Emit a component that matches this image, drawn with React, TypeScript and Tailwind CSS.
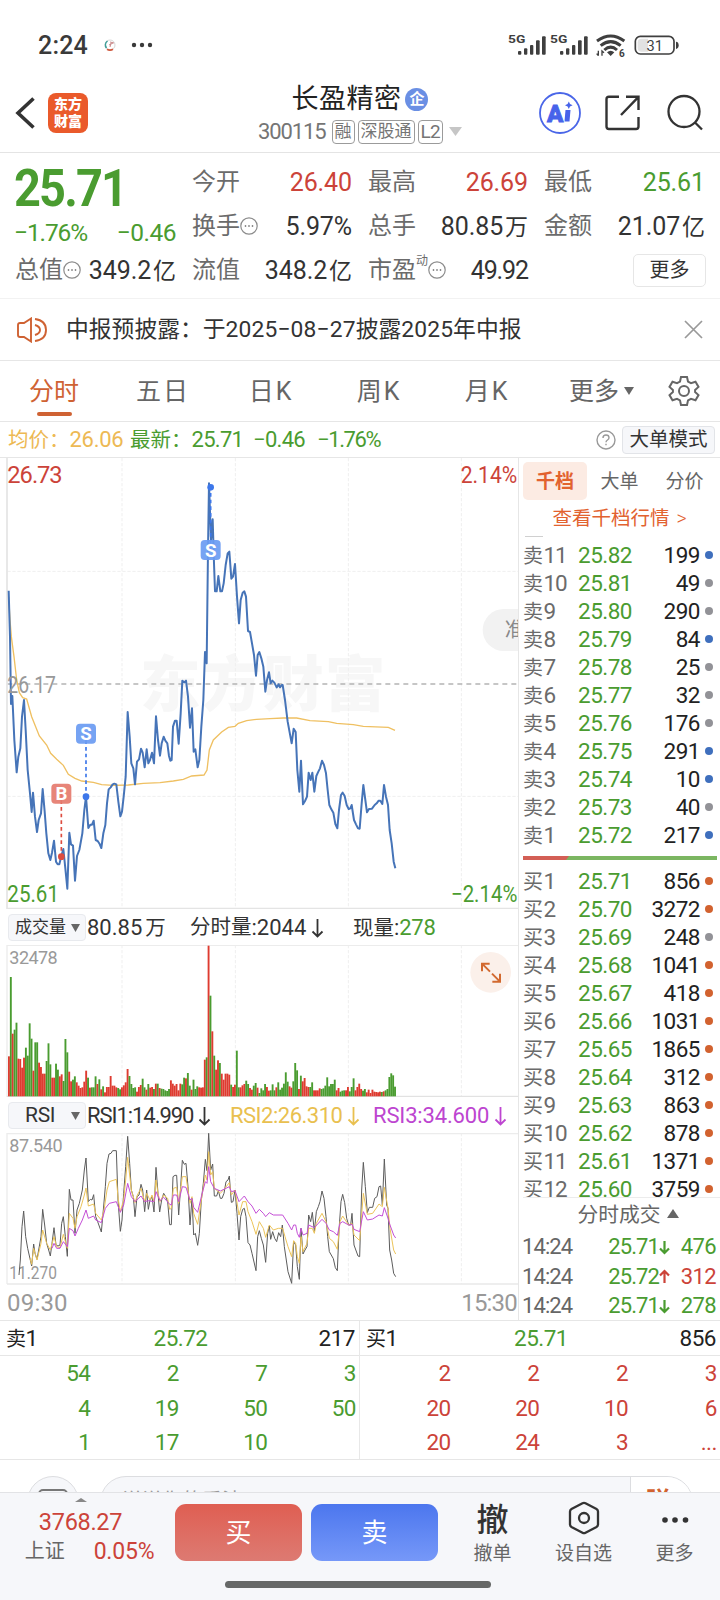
import React from 'react';
import clsx from 'clsx';

const GREEN = '#4a9c30';
const RED = '#cc4339';

// Série de preço do dia (coordenadas em 3x)
const PRICE =
  '26,422 30,560 33,762 37,738 43,870 50,967 55,920 61,895 66,800 72,750 77,840 83,960 90,1030 95,1086 99,1028 105,1100 111,1146 116,1110 123,1090 128,1017 134,1085 139,1150 145,1210 151,1230 156,1208 162,1172 168,1235 173,1243 178,1243 184,1218 190,1197 196,1255 202,1316 208,1148 213,1183 219,1187 225,1292 231,1218 238,1200 247,1150 253,1080 258,1040 265,1134 271,1124 276,1124 281,1112 287,1170 293,1173 299,1182 304,1194 310,1150 316,1125 321,1060 326,1018 332,1012 338,1003 343,1001 349,1003 355,1055 361,1099 366,1085 371,1040 377,980 383,786 389,860 394,940 400,955 405,1003 411,935 417,928 423,896 428,908 434,952 440,898 445,940 450,930 456,908 462,940 468,799 474,870 480,917 485,880 491,860 496,872 502,880 507,918 511,932 515,930 519,830 525,812 530,812 536,881 542,790 547,692 553,697 558,692 564,740 570,833 576,775 581,905 586,898 593,952 598,930 604,830 610,750 615,606 620,640 624,300 627,100 633,270 638,208 642,340 645,424 650,424 655,378 661,424 666,424 671,400 677,345 683,310 688,305 694,386 699,380 705,342 711,440 717,520 722,450 728,428 733,424 738,440 744,543 750,546 756,580 762,615 768,677 773,615 778,606 784,625 790,650 796,725 801,690 807,667 812,700 817,692 823,698 830,712 836,703 840,712 845,705 848,705 855,750 863,815 875,880 881,836 887,846 892,960 898,1025 903,932 909,1063 915,1053 921,1040 926,968 932,990 937,968 943,1025 949,978 955,965 960,955 966,932 972,945 978,970 983,1020 988,1065 994,1078 1000,1088 1006,1122 1012,1135 1017,1080 1023,1035 1028,1028 1034,1038 1040,1065 1046,1077 1051,1075 1055,1065 1062,1110 1068,1123 1074,1135 1079,1136 1085,1060 1090,1005 1096,1050 1101,1087 1107,1077 1116,1076 1124,1065 1130,1060 1136,1052 1141,1052 1147,1062 1152,1005 1158,1040 1164,1065 1169,1140 1175,1180 1181,1235 1186,1255';

const AVERAGE =
  '26,440 30,510 34,560 42,620 50,690 58,728 68,743 80,747 95,800 118,858 140,885 152,910 170,928 190,946 205,973 225,985 245,993 280,997 305,1004 340,1006 385,1005 430,1000 480,998 520,993 550,988 575,978 612,975 621,960 628,900 640,870 665,846 685,832 705,829 715,820 740,812 770,808 810,806 850,804 890,804 930,812 985,815 1010,820 1060,824 1090,829 1165,832 1185,841';

const RSI1 =
  '57,1125 61,1080 66,980 71,933 77,1010 83,1045 95,1098 101,1032 105,1060 111,1078 116,1050 123,1010 128,928 134,975 140,1030 146,1050 151,1068 156,1030 162,983 168,1035 174,1038 180,1035 185,970 190,950 196,1010 202,1069 208,868 213,900 219,900 225,1000 231,930 238,910 247,870 253,810 258,774 265,905 271,898 276,900 281,884 287,950 293,965 304,996 310,930 316,860 321,790 327,762 333,760 338,752 349,752 354,900 361,994 366,960 371,880 377,800 383,709 389,790 394,870 400,890 405,950 411,890 417,885 423,853 428,870 434,935 440,870 445,928 450,900 456,890 462,936 468,802 474,880 479,936 485,900 491,880 497,890 503,905 509,974 514,974 519,830 525,826 530,826 536,945 542,860 547,781 553,793 558,790 564,860 570,975 576,895 581,1005 586,1000 593,1036 598,1000 604,900 610,850 616,778 621,812 626,700 632,810 638,792 643,888 650,888 655,872 661,895 666,895 672,880 678,845 684,840 688,828 694,907 699,905 705,870 711,940 717,1020 722,950 728,928 733,925 738,950 744,1028 750,1035 756,1060 768,1112 773,1010 778,992 784,1015 790,1035 797,1087 803,1000 808,978 812,1018 818,995 824,1015 830,1025 836,998 842,1010 847,975 853,1040 864,1115 875,1150 881,1025 887,1035 892,1100 898,1138 903,985 909,1062 915,1050 921,1040 926,945 932,965 937,937 943,994 949,935 955,920 960,905 966,873 972,895 978,950 983,1010 988,1055 1000,1076 1006,1103 1012,1112 1017,990 1023,905 1028,883 1034,908 1040,955 1046,975 1052,975 1056,940 1062,1035 1074,1068 1079,1070 1085,870 1090,787 1096,860 1102,938 1108,922 1118,922 1124,895 1131,890 1137,860 1142,858 1147,915 1153,777 1160,915 1164,925 1169,1050 1175,1080 1181,1120 1187,1130';

const RSI2 =
  '90,1075 95,1093 101,1045 111,1080 123,1030 128,990 140,1030 151,1050 162,1010 170,1040 180,1043 190,1003 202,1045 208,940 219,955 225,985 231,950 243,920 253,885 258,864 265,918 281,912 287,940 304,960 312,930 321,870 328,845 349,838 355,900 361,935 371,900 377,840 383,772 394,870 405,908 412,885 423,865 434,905 440,880 450,900 456,885 462,905 468,840 474,880 480,905 491,885 503,895 509,928 514,925 520,865 530,862 536,910 547,830 558,830 570,910 576,890 581,940 593,973 604,900 616,825 621,840 626,755 632,825 638,815 643,865 661,880 672,868 688,848 694,885 705,870 717,945 728,905 738,905 744,935 756,965 768,1003 778,965 790,985 797,1012 808,975 820,990 835,985 848,985 855,1010 864,1040 875,1070 881,1022 887,1030 892,1070 898,1090 903,1010 909,1055 921,1030 926,985 937,985 943,1000 949,970 966,940 978,965 988,1015 1000,1025 1012,1048 1020,965 1028,948 1046,975 1056,970 1062,1005 1079,1022 1090,880 1102,943 1118,940 1137,912 1147,920 1153,862 1164,925 1170,985 1181,1050 1187,1062';

const RSI3 =
  '156,1045 162,1030 170,1045 180,1045 190,1025 202,1040 208,985 219,992 225,1008 235,985 247,960 258,930 265,955 281,948 287,960 304,968 316,925 328,910 349,905 361,937 371,915 383,850 394,890 405,905 423,888 434,905 445,902 462,905 468,875 480,902 491,892 509,913 514,915 520,885 530,885 536,905 547,860 558,862 570,900 576,895 581,922 593,937 604,890 616,845 621,850 626,800 632,845 643,865 661,873 688,860 694,875 705,872 717,905 733,888 744,905 756,918 768,940 778,928 790,940 797,950 808,938 820,945 848,945 864,970 875,990 881,975 887,975 892,1000 898,1012 903,985 909,1005 921,1000 926,975 943,983 966,958 978,970 988,990 1000,995 1012,1006 1020,970 1028,965 1046,975 1056,973 1062,988 1079,995 1090,935 1102,960 1118,957 1137,945 1147,948 1153,923 1164,955 1170,975 1181,1005 1187,1014';

// Volume por minuto: positivo = alta, negativo = baixa
const VOLUME = [
  120, -358, 188, -200, -221, 113, 112, 86, 116, -146, -122, -219, -173, 77, -162, -162, 101, 88, 68, 68,
  -106, -159, -96, 56, 56, -98, -80, 60, 66, -46, -172, -132, 74, 45, -50, -60, 42, 32, 25, 27,
  44, 77, -56, 26, -27, -27, -60, 37, -51, 21, -30, 12, 28, 28, 61, 32, 32, 27, -25, -21,
  27, 33, 42, 82, -61, -37, -25, -27, 14, 28, 34, -53, -27, 20, -37, 26, 28, -22, 38, -38,
  25, -23, -22, -18, -16, -22, 48, 38, 32, 37, 18, 38, -36, -56, 54, -70, -32, 20, -50, -22,
  -30, 27, 26, 27, 110, -117, 452, -302, 195, -122, 80, 108, -100, 68, 50, 68, 68, 65, -35, 28,
  35, -137, -27, 27, 33, 37, -47, -37, 25, 20, -32, -40, 26, -10, -24, -18, -37, 28, 17, -18,
  -36, -18, 27, -42, -20, -26, -38, -72, -44, 30, 26, -45, -100, -78, 22, -62, 45, 55, 30, 28,
  -28, -42, 18, 18, 18, 24, -22, -24, -32, -57, -30, -37, -37, -50, 18, 25, -14, -17, -18, 18,
  28, -15, -28, -54, 18, 28, 38, 22, -17, -22, 12, 20, 10, 20, 14, 13, 12, 14, -13, 15,
  -18, -22, -58, -69, -63, -29,
];

type Dot = 'b' | 'g' | 'o';

const SELLS: [string, string, string, Dot][] = [
  ['卖11', '25.82', '199', 'b'],
  ['卖10', '25.81', '49', 'g'],
  ['卖9', '25.80', '290', 'g'],
  ['卖8', '25.79', '84', 'b'],
  ['卖7', '25.78', '25', 'g'],
  ['卖6', '25.77', '32', 'g'],
  ['卖5', '25.76', '176', 'g'],
  ['卖4', '25.75', '291', 'b'],
  ['卖3', '25.74', '10', 'b'],
  ['卖2', '25.73', '40', 'g'],
  ['卖1', '25.72', '217', 'b'],
];

const BUYS: [string, string, string, Dot][] = [
  ['买1', '25.71', '856', 'o'],
  ['买2', '25.70', '3272', 'o'],
  ['买3', '25.69', '248', 'g'],
  ['买4', '25.68', '1041', 'o'],
  ['买5', '25.67', '418', 'o'],
  ['买6', '25.66', '1031', 'o'],
  ['买7', '25.65', '1865', 'o'],
  ['买8', '25.64', '312', 'o'],
  ['买9', '25.63', '863', 'o'],
  ['买10', '25.62', '878', 'o'],
  ['买11', '25.61', '1371', 'o'],
  ['买12', '25.60', '3759', 'o'],
];

const StatusBar: React.FC = () => (
  <div className="flex h-[75px] items-center pl-[38px] pr-[39px] pt-[15px]">
    <span className="text-[25px] font-medium leading-none tracking-[0.2px] text-[#3a3a3a]">2:24</span>
    <svg className="ml-[16px]" width="12" height="12" viewBox="0 0 12 12">
      <circle cx="6" cy="6" r="5" fill="#fff" stroke="#d8d8d8" />
      <path d="M3.500 2C1 4 1 7 2.500 9" stroke="#3f9e98" strokeWidth="1.600" fill="none" />
      <path d="M6 3l4 1M5 6l4-2M6 8l1-4" stroke="#c98a8a" strokeWidth="1" fill="none" />
      <path d="M3 10.300q3 1.600 6 0" stroke="#cf5a3f" strokeWidth="1.800" fill="none" />
    </svg>
    <svg className="ml-[15px]" width="22" height="6" viewBox="0 0 22 6" fill="#3a3a3a">
      <circle cx="3" cy="3" r="2.200" />
      <circle cx="11" cy="3" r="2.200" />
      <circle cx="19" cy="3" r="2.200" />
    </svg>
    <svg className="ml-auto" width="174" height="27" viewBox="440 95 520 81" fill="#3f3f3f">
      {[0, 126].map((dx) => (
        <g key={dx} transform={`translate(${dx} 0)`}>
          <text x="442" y="129" fontSize="34" fontWeight="700" textLength="52" lengthAdjust="spacingAndGlyphs">5G</text>
          <rect x="472" y="152" width="10" height="11" rx="3" />
          <rect x="490" y="144" width="10" height="19" rx="3" />
          <rect x="508" y="134" width="10" height="29" rx="3" />
          <rect x="526" y="120" width="11" height="43" rx="3" />
          <rect x="544" y="108" width="11" height="55" rx="3" />
        </g>
      ))}
      <g fill="none" stroke="#3f3f3f" strokeWidth="9">
        <path d="M709 122Q750 92 791 122" />
        <path d="M720 136Q750 112 780 136" />
        <path d="M731 149Q750 132 769 149" />
      </g>
      <path d="M739 156Q750 147 761 156L750 167Z" />
      <path d="M713 151v15M708 160l5 6M724 166v-14l6 5" stroke="#3f3f3f" strokeWidth="4" fill="none" />
      <text x="775" y="169" fontSize="30" fontWeight="700">6</text>
      <rect x="824" y="108" width="116" height="53" rx="15" fill="none" stroke="#3f3f3f" strokeWidth="5" />
      <path d="M842 115h20v39h-20q-11 0-11-11v-17q0-11 11-11Z" fill="#e2e2e2" />
      <path d="M946 124q8 1 8 11t-8 11Z" />
      <text x="882" y="151" fontSize="44" textAnchor="middle">31</text>
    </svg>
  </div>
);

const Tag: React.FC<{ children: React.ReactNode }> = ({ children }) => (
  <span className="flex h-[24px] items-center rounded-[4px] border border-[#9b9b9b] px-[2px] text-[17px] leading-none text-[#757575]">
    {children}
  </span>
);

const Header: React.FC = () => (
  <div className="flex h-[78px] items-center justify-between border-b border-[#e4e4e4] pb-[2px] pl-[14px] pr-[16px]">
    <div className="flex w-[167px] items-center gap-[12px]">
      <svg width="22" height="34" viewBox="0 0 22 34" fill="none" stroke="#333" strokeWidth="3.600">
        <path d="M19.500 2.500L4 17l15.500 14.500" />
      </svg>
      <div className="flex h-[40px] w-[40px] flex-col items-center justify-center rounded-[8px] bg-[#ea5a2b] text-[14px] font-black leading-[17px] text-white">
        <span>东方</span>
        <span>财富</span>
      </div>
    </div>
    <div className="flex flex-col items-center pt-[3px]">
      <div className="flex items-center">
        <span className="text-[27px] leading-[36px] tracking-[0.500px] text-[#222]">长盈精密</span>
        <span className="ml-[4px] flex h-[23px] w-[23px] items-center justify-center rounded-full bg-[#6a8fe4] text-[15px] font-bold leading-none text-white">
          企
        </span>
      </div>
      <div className="flex h-[30px] items-center gap-[3px] pb-[1px]">
        <span className="text-[22px] leading-none tracking-[-1.100px] text-[#757575]">300115</span>
        <span />
        <Tag>融</Tag>
        <Tag>深股通</Tag>
        <Tag><span className="text-[19px] tracking-[-0.700px]">L2</span></Tag>
        <svg className="ml-[3px]" width="13" height="9" viewBox="0 0 13 9">
          <path d="M0 0h13L6.500 9Z" fill="#c6c6c6" />
        </svg>
      </div>
    </div>
    <div className="flex w-[165px] items-center justify-between">
      <svg width="42" height="42" viewBox="0 0 42 42">
        <circle cx="21" cy="21" r="20" fill="#fff" stroke="#4a66e8" strokeWidth="1.800" />
        <text x="8" y="29.500" fontSize="24" fontWeight="900" fill="#4763ea" stroke="#4763ea" strokeWidth="0.800">A</text>
        <path d="M26.500 18H31.500L30.500 29.500H25.500Z" fill="#4763ea" />
        <path d="M29.800 9.500l1.200 2.600 2.600 1.200-2.600 1.200-1.200 2.600-1.200-2.600-2.600-1.200 2.600-1.200Z" fill="#4763ea" />
      </svg>
      <svg width="36" height="36" viewBox="0 0 36 36" fill="none" stroke="#333" strokeWidth="2.400">
        <path d="M14 1.800H4Q1.500 1.800 1.500 4.300V31.500Q1.500 34 4 34H31Q33.500 34 33.500 31.500V22" />
        <path d="M21 1.800H33.500V15M33.500 1.800L16 20" />
      </svg>
      <svg width="38" height="38" viewBox="0 0 38 38" fill="none" stroke="#333" strokeWidth="2.300">
        <circle cx="18" cy="17.500" r="15.500" />
        <path d="M29 28.500l7 7" />
      </svg>
    </div>
  </div>
);

const InfoDots: React.FC = () => (
  <svg width="18" height="18" viewBox="0 0 18 18" fill="none" stroke="#8c8c8c" strokeWidth="1.200">
    <circle cx="9" cy="9" r="8.200" />
    <path d="M4.800 9h1.400M8.300 9h1.400M11.800 9h1.400" strokeWidth="1.800" />
  </svg>
);

interface StatProps {
  label: string;
  value: string;
  unit?: string;
  color?: string;
  dots?: boolean;
  sup?: string;
}

const Stat: React.FC<StatProps> = ({ label, value, unit, color = 'text-[#333]', dots, sup }) => (
  <div className="flex h-[44px] items-center justify-between leading-none">
    <span className="flex items-center text-[24px] text-[#6b6b6b]">
      {label}
      {sup && <span className="-mt-[3px] self-start text-[12px] leading-none">{sup}</span>}
      {dots && <InfoDots />}
    </span>
    <span className={clsx('whitespace-nowrap text-[25px]', sup ? 'tracking-[-1.100px]' : 'tracking-[-0.100px]', color)}>
      {value}
      {unit && <span className="ml-[2px] text-[23px]">{unit}</span>}
    </span>
  </div>
);

const Quote: React.FC = () => (
  <div className="grid h-[146px] grid-cols-4 gap-4 border-b border-[#f2f2f2] px-4 pt-[7px]">
    <div className="-ml-[1px] text-[#4a9c30]">
      <div className="-ml-[1px] h-[57px] origin-left scale-x-[0.920] text-[51px] font-bold leading-[58px] tracking-[-2px]">25.71</div>
      <div className="-ml-[1px] flex h-[31px] items-center justify-between pt-[2px] text-[24.500px]">
        <span className="tracking-[-1.100px]">−1.76%</span>
        <span className="tracking-[-0.500px]">−0.46</span>
      </div>
      <Stat label="总值" value="349.2" unit="亿" dots />
    </div>
    <div>
      <Stat label="今开" value="26.40" color="text-[#cc4339]" />
      <Stat label="换手" value="5.97%" dots />
      <Stat label="流值" value="348.2" unit="亿" />
    </div>
    <div>
      <Stat label="最高" value="26.69" color="text-[#cc4339]" />
      <Stat label="总手" value="80.85" unit="万" />
      <Stat label="市盈" value="49.92" sup="动" dots />
    </div>
    <div className="-mr-[1px]">
      <Stat label="最低" value="25.61" color="text-[#4a9c30]" />
      <Stat label="金额" value="21.07" unit="亿" />
      <div className="flex h-[44px] items-center justify-end">
        <button className="-mr-[1px] h-[33px] w-[73px] rounded-[5px] border border-[#e6e6e6] text-[20px] leading-none text-[#333]">更多</button>
      </div>
    </div>
  </div>
);

const Notice: React.FC = () => (
  <div className="flex h-[62px] items-center border-b border-[#e6e6e6] pl-[17px] pr-[17px]">
    <svg width="31" height="26" viewBox="0 0 31 26" fill="none" stroke="#cf6233" strokeWidth="1.900">
      <path d="M14 1.500L7 6H3Q1 6 1 8v10q0 2 2 2h4l7 4.500Z" />
      <path d="M18 8q5 1.500 5 5t-5 5" />
      <path d="M18 2q11 1.500 11 11T18 24" />
    </svg>
    <span className="ml-[18px] pt-[1px] text-[22.800px] leading-none text-[#333]">
      中报预披露：于<span className="tracking-[0.150px]">2025−08−27</span>披露<span className="tracking-[0.150px]">2025</span>年中报
    </span>
    <svg className="ml-auto" width="19" height="19" viewBox="0 0 19 19" stroke="#999" strokeWidth="1.700">
      <path d="M1 1l17 17M18 1L1 18" />
    </svg>
  </div>
);

const TABS = ['五日', '日K', '周K', '月K'];

const ChartTabs: React.FC = () => (
  <div className="flex h-[61px] items-center border-b border-[#e6e6e6] text-[25px] leading-none text-[#666]">
    <div className="flex h-full w-[108px] flex-col items-center justify-between pb-[5px] pt-[18px] text-[#cf6233]">
      <span>分时</span>
      <span className="h-[4px] w-[35px] rounded-full bg-[#cf6233]" />
    </div>
    {TABS.map((t) => (
      <span key={t} className="w-[108px] pl-[2px] text-center tracking-[2px]">{t}</span>
    ))}
    <span className="ml-[29px]">更多</span>
    <svg className="ml-[5px]" width="10" height="8" viewBox="0 0 10 8">
      <path d="M0 0h10L5 8Z" fill="#666" />
    </svg>
    <svg className="ml-auto mr-[20px]" width="32" height="32" viewBox="0 0 32 32" fill="none" stroke="#666" strokeWidth="2">
      <path d="M13 2h6l1 4.500 3 1.700 4.500-1.500 3 5.200-3.400 3v2.200l3.400 3-3 5.200-4.500-1.500-3 1.700-1 4.500h-6l-1-4.500-3-1.700-4.500 1.500-3-5.200 3.400-3v-2.200l-3.400-3 3-5.200L9 8.200l3-1.700Z" />
      <circle cx="16" cy="16" r="5" />
    </svg>
  </div>
);

const PriceLine: React.FC = () => (
  <div className="flex h-[36px] items-center whitespace-pre border-b border-[#e6e6e6] pl-[8px] pr-[5px] pt-[1px] text-[22px] leading-none tracking-[-0.300px]">
    <span className="w-[122px] text-[#edb954]"><span className="text-[20.500px] tracking-normal">均价：</span>26.06</span>
    <span className="w-[123px] text-[#4a9c30]"><span className="text-[20.500px] tracking-normal">最新：</span><span className="tracking-[-0.700px]">25.71</span></span>
    <span className="w-[64px] tracking-[-0.700px] text-[#4a9c30]">−0.46</span>
    <span className="tracking-[-1.400px] text-[#4a9c30]">−1.76%</span>
    <svg className="ml-auto" width="20" height="20" viewBox="0 0 20 20" fill="none" stroke="#999" strokeWidth="1.400">
      <circle cx="10" cy="10" r="9" />
      <path d="M7 8q0-3 3-3t3 2.700q0 1.300-1.500 2.300T10 12.300M10 13.700v1.600" />
    </svg>
    <button className="ml-[6px] h-[28px] w-[93px] rounded-[4px] border border-[#e2e4e8] bg-[#f6f7fa] text-[19.500px] leading-none tracking-normal text-[#333]">大单模式</button>
  </div>
);

const Grid: React.FC<{ top: number; bottom: number }> = ({ top, bottom }) => (
  <g stroke="#efefef" strokeWidth="3" strokeDasharray="10 5">
    {[366, 706, 1045, 1384].map((x) => (
      <path key={x} d={`M${x} ${top}V${bottom}`} />
    ))}
  </g>
);

const Marker: React.FC<{ x: number; y: number; to: number; label: string; color: string; dot: string }> = ({ x, y, to, label, color, dot }) => (
  <g>
    <path d={`M${x} ${y}V${to}`} stroke={dot} strokeWidth="5" strokeDasharray="11 9" />
    <circle cx={x} cy={to} r="10" fill={dot} />
    <rect x={x - 30} y={y - 30} width="60" height="60" rx="12" fill={color} opacity="0.920" />
    <text x={x} y={y + 20} fontSize="56" fontWeight="700" fill="#fff" textAnchor="middle">{label}</text>
  </g>
);

const PriceChart: React.FC = () => (
  <svg className="block" width="518" height="451" viewBox="0 24 1554 1353">
    <text x="420" y="768" fontSize="182" fontWeight="900" fill="#f7f7f7" textLength="736">东方财富</text>
    <Grid top={24} bottom={1377} />
    <path d="M22 364H1554M22 1039H1554" stroke="#efefef" strokeWidth="3" strokeDasharray="10 5" />
    <path d="M22 702H1554" stroke="#b4b4b4" strokeWidth="5" strokeDasharray="15 12" />
    <path d="M21 24V1376H1554" fill="none" stroke="#e4e4e4" strokeWidth="5" />
    <rect x="1448" y="477" width="200" height="126" rx="63" fill="#f2f2f2" />
    <text x="1514" y="562" fontSize="60" fill="#888">准</text>
    <polyline points={AVERAGE} fill="none" stroke="#efc062" strokeWidth="4" />
    <polyline points={PRICE} fill="none" stroke="#4674b8" strokeWidth="6" strokeLinejoin="round" />
    <Marker x={184} y={1031} to={1220} label="B" color="#e57b6e" dot="#dd4d40" />
    <Marker x={258} y={851} to={1040} label="S" color="#6a9bf2" dot="#3d77ea" />
    <Marker x={632} y={300} to={112} label="S" color="#6a9bf2" dot="#3d77ea" />
    <g fontSize="71">
      <text x="22" y="99" fill={RED} textLength="166">26.73</text>
      <text x="22" y="728" fill="#999" textLength="146" lengthAdjust="spacingAndGlyphs">26.17</text>
      <text x="22" y="1357" fill={GREEN} textLength="155" lengthAdjust="spacingAndGlyphs">25.61</text>
      <text x="1382" y="99" fill={RED} textLength="170" lengthAdjust="spacingAndGlyphs">2.14%</text>
      <text x="1353" y="1357" fill={GREEN} textLength="199" lengthAdjust="spacingAndGlyphs">−2.14%</text>
    </g>
  </svg>
);

const Select: React.FC<{ label: string; wide?: boolean }> = ({ label, wide }) => (
  <span className="flex h-[27px] w-[78px] items-center justify-between rounded-[4px] border border-[#e8eaee] bg-[#f6f7fa] pl-[6px] pr-[5px] text-[17px] leading-none text-[#333]">
    <span className={clsx(wide && 'pl-[10px] text-[21px] tracking-[-0.300px]')}>{label}</span>
    <svg width="9" height="8" viewBox="0 0 9 8">
      <path d="M0 0h9L4.500 8Z" fill="#666" />
    </svg>
  </span>
);

const DownArrow: React.FC = () => (
  <svg className="ml-[5px] inline-block" width="13" height="20" viewBox="0 0 13 20" fill="none" stroke="currentColor" strokeWidth="1.800">
    <path d="M6.500 1v17M1.500 13.500l5 5 5-5" />
  </svg>
);

const VolumeChart: React.FC = () => (
  <svg className="block" width="518" height="152" viewBox="0 136 1554 456">
    <Grid top={136} bottom={590} />
    <path d="M21 592V137H1554" fill="none" stroke="#ececec" strokeWidth="4" />
    <path d="M21 590H1554" stroke="#dcdcdc" strokeWidth="3" />
    {VOLUME.map((v, i) => (
      <rect key={i} x={24 + i * 5.65} y={590 - Math.abs(v)} width="5.650" height={Math.abs(v)} fill={v > 0 ? '#de3b30' : '#4a9c30'} />
    ))}
    <text x="28" y="194" fontSize="54" fill="#999" textLength="145">32478</text>
    <circle cx="1472" cy="218" r="61" fill="#fbf0ea" />
    <path d="M1446 215V192H1469M1446 192l24 24M1500 222v24h-23M1500 246l-24-24" fill="none" stroke="#d2692f" strokeWidth="6" />
  </svg>
);

const RsiChart: React.FC = () => (
  <svg className="block" width="518" height="152" viewBox="0 699 1554 456">
    <Grid top={699} bottom={1152} />
    <path d="M21 1152V701H1554" fill="none" stroke="#ececec" strokeWidth="4" />
    <path d="M21 1152H1554" stroke="#e8e8e8" strokeWidth="5" />
    <text x="28" y="756" fontSize="54" fill="#999" textLength="160">87.540</text>
    <text x="28" y="1136" fontSize="54" fill="#999" textLength="143" lengthAdjust="spacingAndGlyphs">11.270</text>
    <g fill="none" strokeWidth="3">
      <polyline points={RSI1} stroke="#5c5c5c" />
      <polyline points={RSI2} stroke="#ecc45a" />
      <polyline points={RSI3} stroke="#c44fd6" />
    </g>
  </svg>
);

const Charts: React.FC = () => (
  <div className="w-[518px] text-[#333]">
    <PriceChart />
    <div className="flex h-[36px] items-center pl-[8px] pt-[1px] text-[22px] leading-none">
      <Select label="成交量" />
      <span className="ml-[1px] w-[103px] whitespace-nowrap">80.85<span className="ml-[3px] text-[20.500px]">万</span></span>
      <span className="flex w-[163px] items-center whitespace-nowrap"><span className="text-[20.500px]">分时量</span>:2044<DownArrow /></span>
      <span className="whitespace-nowrap tracking-[-0.200px]"><span className="text-[20.500px] tracking-normal">现量</span>:<span className="text-[#4a9c30]">278</span></span>
    </div>
    <VolumeChart />
    <div className="flex h-[36px] items-center whitespace-nowrap pl-[8px] pt-[1px] text-[22px] leading-none">
      <Select label="RSI" wide />
      <span className="ml-[1px] flex w-[143px] items-center tracking-[-1.050px]">RSI1:14.990<DownArrow /></span>
      <span className="flex w-[143px] items-center tracking-[-0.500px] text-[#e9c04f]">RSI2:26.310<DownArrow /></span>
      <span className="flex items-center tracking-[-0.150px] text-[#bd45d0]">RSI3:34.600<DownArrow /></span>
    </div>
    <RsiChart />
    <div className="flex h-[35px] items-center justify-between pl-[7px] pr-[1px] text-[24px] leading-none text-[#999]">
      <span className="tracking-[0.200px]">09:30</span>
      <span className="tracking-[-0.800px]">15:30</span>
    </div>
  </div>
);

const Level: React.FC<{ row: [string, string, string, Dot] }> = ({ row: [label, price, amount, dot] }) => (
  <div className="flex h-[28px] items-center text-[22.500px] leading-none tracking-[-0.500px]">
    <span className="w-[50px] whitespace-nowrap text-[#6b6b6b]"><span className="mr-[1px] text-[20px]">{label[0]}</span><span className="tracking-[-1.200px]">{label.slice(1)}</span></span>
    <span className="w-[59px] text-right text-[#4a9c30]">{price}</span>
    <span className="w-[68px] text-right text-[#222]">{amount}</span>
    <span
      className={clsx(
        'ml-[5px] h-[8px] w-[8px] rounded-full',
        dot === 'b' && 'bg-[#3f6fbd]',
        dot === 'g' && 'bg-[#929297]',
        dot === 'o' && 'bg-[#d2622f]'
      )}
    />
  </div>
);

const TRADES = [
  { price: '25.71', up: false, amount: '476' },
  { price: '25.72', up: true, amount: '312' },
  { price: '25.71', up: false, amount: '278' },
];

const OrderBook: React.FC = () => (
  <div className="w-[202px] border-l border-[#e6e6e6] pl-[4px]">
    <div className="flex h-[43px] items-center pt-[3px] text-[19px] leading-none text-[#666]">
      <span className="flex h-[38px] w-[64px] items-center justify-center rounded-[5px] bg-[#fcebe3] font-bold text-[#e2622f]">千档</span>
      <span className="w-[65px] text-center">大单</span>
      <span className="w-[65px] text-center">分价</span>
    </div>
    <div className="flex h-[34px] items-center justify-center pr-[4px] pt-[1px] text-[19.500px] leading-none text-[#e2622f]">查看千档行情<span className="ml-[7px] font-light">&gt;</span></div>
    <div className="flex h-[6px] flex-col justify-end overflow-hidden">
      <span className="mb-[4px] ml-[2px] h-px w-[18px] shrink-0 bg-[#d0d0d0]" />
    </div>
    {SELLS.map((r) => (
      <Level key={r[0]} row={r} />
    ))}
    <div className="mb-[7px] mt-[7px] flex h-[4px] w-[194px] bg-[#7bb661]">
      <svg width="46" height="4" viewBox="0 0 46 4"><path d="M0 0H46L43 4H0Z" fill="#d35f55" /></svg>
    </div>
    <div className="h-[331px] overflow-hidden border-b border-[#ececec]">
      {BUYS.map((r) => (
        <Level key={r[0]} row={r} />
      ))}
    </div>
    <div className="flex h-[34px] items-center justify-center gap-[6px] pl-[13px] text-[20.800px] leading-none text-[#666]">
      分时成交
      <svg className="-mt-[3px]" width="12" height="9" viewBox="0 0 12 9"><path d="M6 0l6 9H0Z" fill="#666" /></svg>
    </div>
    {TRADES.map((t, i) => (
      <div key={i} className="flex h-[29.500px] items-center pt-[1px] text-[22px] leading-none tracking-[-0.600px]">
        <span className="w-[58px] -ml-[1px] mr-[1px] tracking-[-0.900px] text-[#666]">14:24</span>
        <span className="w-[78px] text-right tracking-[-0.900px] text-[#4a9c30]">{t.price}</span>
        <svg width="11" height="15" viewBox="0 0 11 15" fill="none" strokeWidth="2.200" stroke={t.up ? RED : GREEN}>
          <path d={t.up ? 'M5.500 14V2M1 6.500l4.500-4.500L10 6.500' : 'M5.500 1v12M1 8.500l4.500 4.500L10 8.500'} />
        </svg>
        <span className={clsx('w-[46px] text-right', t.up ? 'text-[#cc4339]' : 'text-[#4a9c30]')}>{t.amount}</span>
      </div>
    ))}
  </div>
);

interface QueueProps {
  label: string;
  price: string;
  total: string;
  color: string;
  cells: string[];
}

const Queue: React.FC<QueueProps> = ({ label, price, total, color, cells }) => (
  <div className="w-[360px] border-r border-[#e8e8e8] text-[22.500px] leading-none tracking-[-0.500px] last:border-r-0">
    <div className="grid h-[35px] grid-cols-3 items-center border-b border-[#e6e6e6] pl-[6px] pr-[4px] text-[#222]">
      <span><span className="text-[20px]">{label[0]}</span>{label[1]}</span>
      <span className="text-center text-[#4a9c30]">{price}</span>
      <span className="text-right">{total}</span>
    </div>
    <div className={clsx('grid grid-cols-4 pl-[2px] pr-[3px] text-right', color)}>
      {cells.map((c, i) => (
        <span key={i} className="flex h-[34.700px] items-center justify-end">{c}</span>
      ))}
    </div>
  </div>
);

const BottomBar: React.FC = () => (
  <div className="flex h-[108px] flex-col border-t border-[#e2e3e6] bg-[#f6f7fa]">
    <div className="flex h-[80px] pt-[5px]">
      <div className="flex w-[175px] flex-col items-center pr-[14px] leading-none">
        <svg width="12" height="4" viewBox="0 0 12 4"><path d="M6 0l6 4H0Z" fill="#888" /></svg>
        <span className="mt-[9px] text-[23.500px] tracking-[-0.300px] text-[#cc4339]">3768.27</span>
        <div className="mt-[5px] flex items-center gap-[29px] pl-[18px] text-[#cc4339]">
          <span className="text-[20px] text-[#666]">上证</span>
          <span className="text-[23px] tracking-[-0.200px]">0.05%</span>
        </div>
      </div>
      <button className="mt-[6px] h-[57px] w-[127px] rounded-[11px] bg-gradient-to-b from-[#df5e52] to-[#dd7a72] text-[26px] leading-none text-white">买</button>
      <button className="ml-[9px] mt-[6px] h-[57px] w-[127px] rounded-[11px] bg-gradient-to-b from-[#4c76ee] to-[#7698f8] text-[26px] leading-none text-white">卖</button>
      <div className="ml-[9px] flex w-[91px] flex-col items-center text-[19px] leading-none text-[#666]">
        <span className="h-[46px] text-[32px] font-medium leading-[45px] text-[#333]">撤</span>
        <span>撤单</span>
      </div>
      <div className="flex w-[91px] flex-col items-center text-[19px] leading-none text-[#666]">
        <svg className="mb-[9px] mt-[3px]" width="32" height="34" viewBox="0 0 32 34" fill="none" stroke="#333" strokeWidth="2.300">
          <path d="M14.500 2.200Q16 1.400 17.500 2.200L28.500 8Q30 8.900 30 10.500V23.500Q30 25.100 28.500 26L17.500 31.800Q16 32.600 14.500 31.800L3.500 26Q2 25.100 2 23.500V10.500Q2 8.900 3.500 8Z" />
          <circle cx="16" cy="17" r="5" />
        </svg>
        <span>设自选</span>
      </div>
      <div className="flex w-[91px] flex-col items-center text-[19px] leading-none text-[#666]">
        <svg className="mb-[20px] mt-[18px]" width="28" height="8" viewBox="0 0 28 8" fill="#333">
          <circle cx="4" cy="4" r="2.800" />
          <circle cx="14" cy="4" r="2.800" />
          <circle cx="24.500" cy="4" r="2.800" />
        </svg>
        <span>更多</span>
      </div>
    </div>
    <div className="mr-[4px] mt-[8px] h-[7px] w-[266px] self-center rounded-full bg-[#666867]" />
  </div>
);

export default function App() {
  return (
    <div className="flex h-[1600px] w-[720px] flex-col overflow-hidden bg-white font-[Roboto,'Noto_Sans_CJK_SC',sans-serif]">
      <StatusBar />
      <Header />
      <Quote />
      <Notice />
      <ChartTabs />
      <PriceLine />
      <div className="flex h-[863px] border-b border-[#e6e6e6]">
        <Charts />
        <OrderBook />
      </div>
      <div className="flex h-[139px] border-b border-[#e6e6e6]">
        <Queue label="卖1" price="25.72" total="217" color="text-[#4a9c30]" cells={['54', '2', '7', '3', '4', '19', '50', '50', '1', '17', '10', '']} />
        <Queue label="买1" price="25.71" total="856" color="text-[#cc4339]" cells={['2', '2', '2', '3', '20', '20', '10', '6', '20', '24', '3', '...']} />
      </div>
      {/* Caixa de comentário parcialmente coberta pela barra inferior */}
      <div className="flex h-[32px] shrink-0 overflow-hidden pl-[27px] pt-[16px]">
        <div className="flex h-[52px] w-[52px] shrink-0 justify-center rounded-full border border-[#dcdde0] bg-[#f6f7fa] pt-[12px]">
          <span className="h-[26px] w-[30px] rounded-[5px] border-2 border-[#777]" />
        </div>
        <div className="ml-[21px] flex h-[52px] w-[593px] shrink-0 overflow-hidden rounded-full border border-[#dcdde0] bg-[#f6f7fa]">
          <span className="flex-1 pl-[21px] pt-[14px] text-[20px] leading-none text-[#999]">说说你的看法</span>
          <span className="w-[62px] border-l border-[#dcdde0] bg-white pl-[15px] pt-[12px] text-[25px] font-bold leading-none text-[#d2622f]">弹</span>
        </div>
      </div>
      <BottomBar />
    </div>
  );
}
